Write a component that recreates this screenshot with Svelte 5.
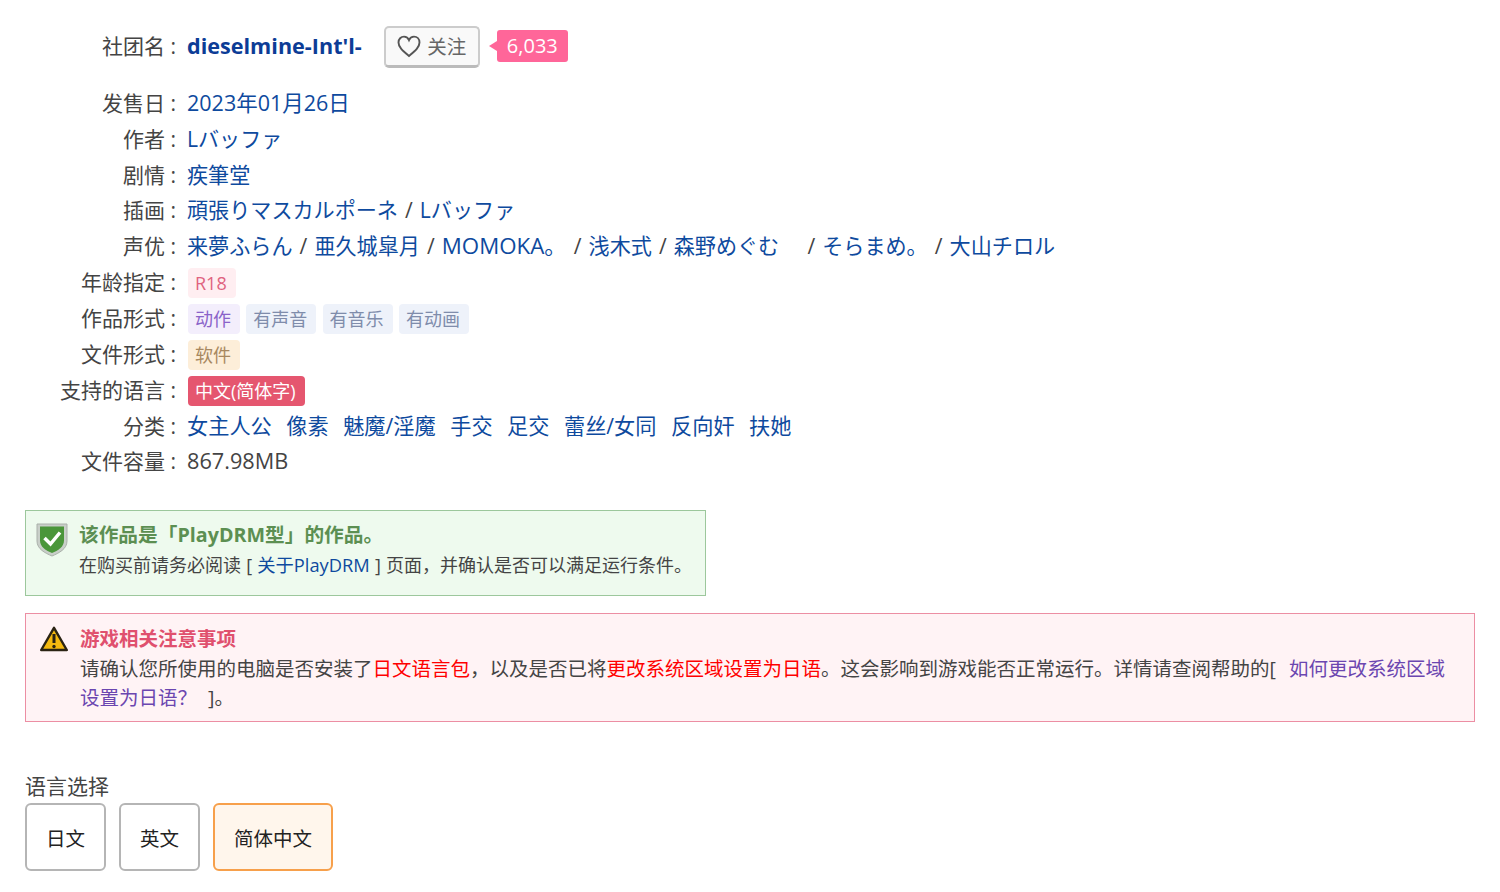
<script lang="ts">
  const fonts = ["日文", "英文"];
  const works = ["有声音", "有音乐", "有动画"];
  const genres = ["女主人公", "像素", "魅魔/淫魔", "手交", "足交", "蕾丝/女同", "反向奸", "扶她"];
</script>

<div class="page">
  <div class="info">
    <div class="row maker">
      <div class="label">社团名 :</div>
      <div class="value">
        <a class="maker-name" href="#maker">dieselmine-Int'l-</a>
        <button class="follow">
          <svg width="24" height="23" viewBox="0 0 24 23" fill="none" stroke="#555" stroke-width="1.9">
            <path d="M12 21 C 6 16 1.5 12.5 1.5 7.5 C 1.5 4 4 1.6 7 1.6 C 9 1.6 11 2.7 12 5 C 13 2.7 15 1.6 17 1.6 C 20 1.6 22.5 4 22.5 7.5 C 22.5 12.5 18 16 12 21 Z" />
          </svg>
          <span>关注</span>
        </button>
        <span class="count">6,033</span>
      </div>
    </div>
    <div class="row">
      <div class="label">发售日 :</div>
      <div class="value date"><a href="#date">2023年01月26日</a></div>
    </div>
    <div class="row">
      <div class="label">作者 :</div>
      <div class="value"><a href="#author">Lバッファ</a></div>
    </div>
    <div class="row">
      <div class="label">剧情 :</div>
      <div class="value"><a href="#story">疾筆堂</a></div>
    </div>
    <div class="row">
      <div class="label">插画 :</div>
      <div class="value"><a href="#art">頑張りマスカルポーネ</a> / <a href="#art">Lバッファ</a></div>
    </div>
    <div class="row">
      <div class="label">声优 :</div>
      <div class="value">
        <a href="#cv">来夢ふらん</a> / <a href="#cv">亜久城皐月</a> / <a class="latin" href="#cv">MOMOKA。</a> / <a href="#cv">浅木式</a> / <a href="#cv">森野めぐむ　</a> / <a href="#cv">そらまめ。</a> / <a href="#cv">大山チロル</a>
      </div>
    </div>
    <div class="row">
      <div class="label">年龄指定 :</div>
      <div class="value tags"><span class="tag age">R18</span></div>
    </div>
    <div class="row">
      <div class="label">作品形式 :</div>
      <div class="value tags">
        <span class="tag action">动作</span>
        {#each works as w}<span class="tag extra">{w}</span>{/each}
      </div>
    </div>
    <div class="row">
      <div class="label">文件形式 :</div>
      <div class="value tags"><span class="tag soft">软件</span></div>
    </div>
    <div class="row">
      <div class="label">支持的语言 :</div>
      <div class="value tags"><span class="tag lang">中文(简体字)</span></div>
    </div>
    <div class="row">
      <div class="label">分类 :</div>
      <div class="value genres">
        {#each genres as g}<a href="#genre">{g}</a>{/each}
      </div>
    </div>
    <div class="row">
      <div class="label">文件容量 :</div>
      <div class="value size">867.98MB</div>
    </div>
  </div>

  <div class="notice drm">
    <svg class="shield" width="32" height="36" viewBox="0 0 32 36">
      <path d="M1 3 L31 3 L31 20 C31 28 23 32 16 35 C9 32 1 28 1 20 Z" fill="#c9cfc9" stroke="#aab0aa" stroke-width="1" />
      <path d="M4 5.5 L28 5.5 L28 19.5 C28 26 22 29.5 16 32 C10 29.5 4 26 4 19.5 Z" fill="#4a963a" />
      <path d="M8.5 17 L14.5 23 L24 11.5" fill="none" stroke="#fff" stroke-width="3.5" />
    </svg>
    <div class="notice-text">
      <div class="drm-title">该作品是「PlayDRM型」的作品。</div>
      <div class="drm-body">在购买前请务必阅读 [ <a href="#drm">关于PlayDRM</a> ] 页面，并确认是否可以满足运行条件。</div>
    </div>
  </div>

  <div class="notice caution">
    <svg class="warn" width="28" height="26" viewBox="0 0 28 26">
      <path d="M14 1.8 L26.8 24 L1.2 24 Z" fill="#f5b90f" stroke="#2b2313" stroke-width="2.4" stroke-linejoin="round" />
      <path d="M14 8 L14 17" stroke="#2b2313" stroke-width="3" />
      <circle cx="14" cy="20.5" r="1.7" fill="#2b2313" />
    </svg>
    <div class="notice-text">
      <div class="caution-title">游戏相关注意事项</div>
      <div class="caution-body">请确认您所使用的电脑是否安装了<em>日文语言包</em>，以及是否已将<em>更改系统区域设置为日语</em>。这会影响到游戏能否正常运行。详情请查阅帮助的[<a href="#help">如何更改系统区域设置为日语？</a>]。</div>
    </div>
  </div>

  <div class="lang-title">语言选择</div>
  <div class="lang-list">
    {#each fonts as f}<button class="lang-btn">{f}</button>{/each}
    <button class="lang-btn active">简体中文</button>
  </div>
</div>

<style>
  :global(body) {
    background: #fff;
  }

  .page {
    font-family: "Open Sans", "Noto Sans CJK SC", sans-serif;
    color: #444;
    padding: 26px 25px 0;
    font-size: 21px;
  }

  .info {
    display: flex;
    flex-direction: column;
  }

  .row {
    display: flex;
    height: 35.85px;
    align-items: center;
  }

  .row.maker {
    height: 42px;
    margin-bottom: 16px;
  }

  .label {
    width: 151px;
    text-align: right;
    flex: none;
    white-space: nowrap;
  }

  .value {
    margin-left: 11px;
    margin-top: 2px;
    white-space: pre-wrap;
    word-spacing: 1.6px;
    font-size: 21.1px;
    line-height: 30px;
  }

  a {
    color: #0e4a9e;
    text-decoration: none;
  }

  .date {
    font-size: 21.5px;
  }

  .size {
    font-size: 21.7px;
  }

  .latin {
    font-size: 22.3px;
  }

  .maker-name {
    font-weight: 700;
    font-size: 21.6px;
    color: #0c3c96;
    margin-bottom: 2px;
  }

  .maker .label {
    margin-bottom: 4px;
  }

  .maker .value {
    display: flex;
    align-items: center;
    margin-top: 0;
  }

  .follow {
    margin-left: 22px;
    width: 96px;
    height: 42px;
    display: flex;
    align-items: center;
    justify-content: center;
    gap: 6px;
    background: #f9f9f9;
    border: 2px solid #ccc;
    border-bottom: 3px solid #bbb;
    border-radius: 5px;
    font: inherit;
    font-size: 19.5px;
    color: #666;
    padding: 0;
  }

  .count {
    position: relative;
    margin-left: 17px;
    margin-bottom: 2px;
    height: 32px;
    line-height: 32px;
    width: 71px;
    text-align: center;
    border-radius: 3px;
    background: #ff6699;
    color: #fff;
    font-size: 20px;
  }

  .count::before {
    content: "";
    position: absolute;
    left: -8px;
    top: 11px;
    border: 5px solid transparent;
    border-left: 0;
    border-right: 8px solid #ff6699;
  }

  .tags {
    display: flex;
    gap: 6.3px;
    margin-left: 12px;
    margin-top: 4px;
  }

  .tag {
    height: 30px;
    line-height: 30px;
    padding: 0 9px 0 7px;
    font-size: 18px;
    border-radius: 4px;
  }

  .age {
    background: #ffeef1;
    color: #e0637f;
  }

  .action {
    background: #f3eefc;
    color: #8a63c9;
  }

  .extra {
    background: #eef2fa;
    color: #7f8cab;
  }

  .soft {
    background: #fdeed9;
    color: #a88860;
  }

  .lang {
    background: #e5566f;
    color: #fff;
  }

  .genres {
    display: flex;
    gap: 14.5px;
    font-size: 21.2px;
  }

  .notice {
    display: flex;
    box-sizing: border-box;
    border: 1px solid;
  }

  .drm {
    margin-top: 31.5px;
    width: 681px;
    height: 86px;
    background: #eefaee;
    border-color: #9cc79c;
    padding: 10px;
    gap: 11px;
  }

  .drm-title {
    font-weight: 700;
    font-size: 19.7px;
    color: #5c8f52;
    line-height: 28px;
    margin-bottom: 1px;
  }

  .drm-body {
    font-size: 18px;
    line-height: 30px;
    word-spacing: 0.5px;
  }

  .drm-body a {
    font-size: 18.3px;
  }

  .caution {
    margin-top: 17px;
    height: 109px;
    background: #fff3f5;
    border-color: #ec8ea3;
    padding: 11px 14px 11px 14px;
    gap: 12px;
  }

  .warn {
    flex: none;
    margin-top: 1px;
  }

  .caution-title {
    font-weight: 700;
    font-size: 19.5px;
    color: #e0506e;
    line-height: 28px;
    margin-bottom: 1px;
  }

  .caution-body {
    font-size: 19.5px;
    line-height: 29.5px;
  }

  .caution-body em {
    font-style: normal;
    color: #f00;
  }

  .caution-body a {
    color: #6b46b0;
    padding: 0 11px 0 13px;
  }

  .lang-title {
    margin-top: 48px;
    line-height: 32px;
  }

  .lang-list {
    display: flex;
    gap: 13px;
    margin-top: 1px;
  }

  .lang-btn {
    height: 68px;
    width: 81px;
    box-sizing: border-box;
    border: 2px solid #b5b5b5;
    border-radius: 6px;
    background: #fff;
    font: inherit;
    font-size: 19.5px;
    color: #222;
    padding: 1px 0 0;
  }

  .lang-btn.active {
    width: 120px;
    background: #fff6ec;
    border-color: #f7a04b;
  }
</style>
